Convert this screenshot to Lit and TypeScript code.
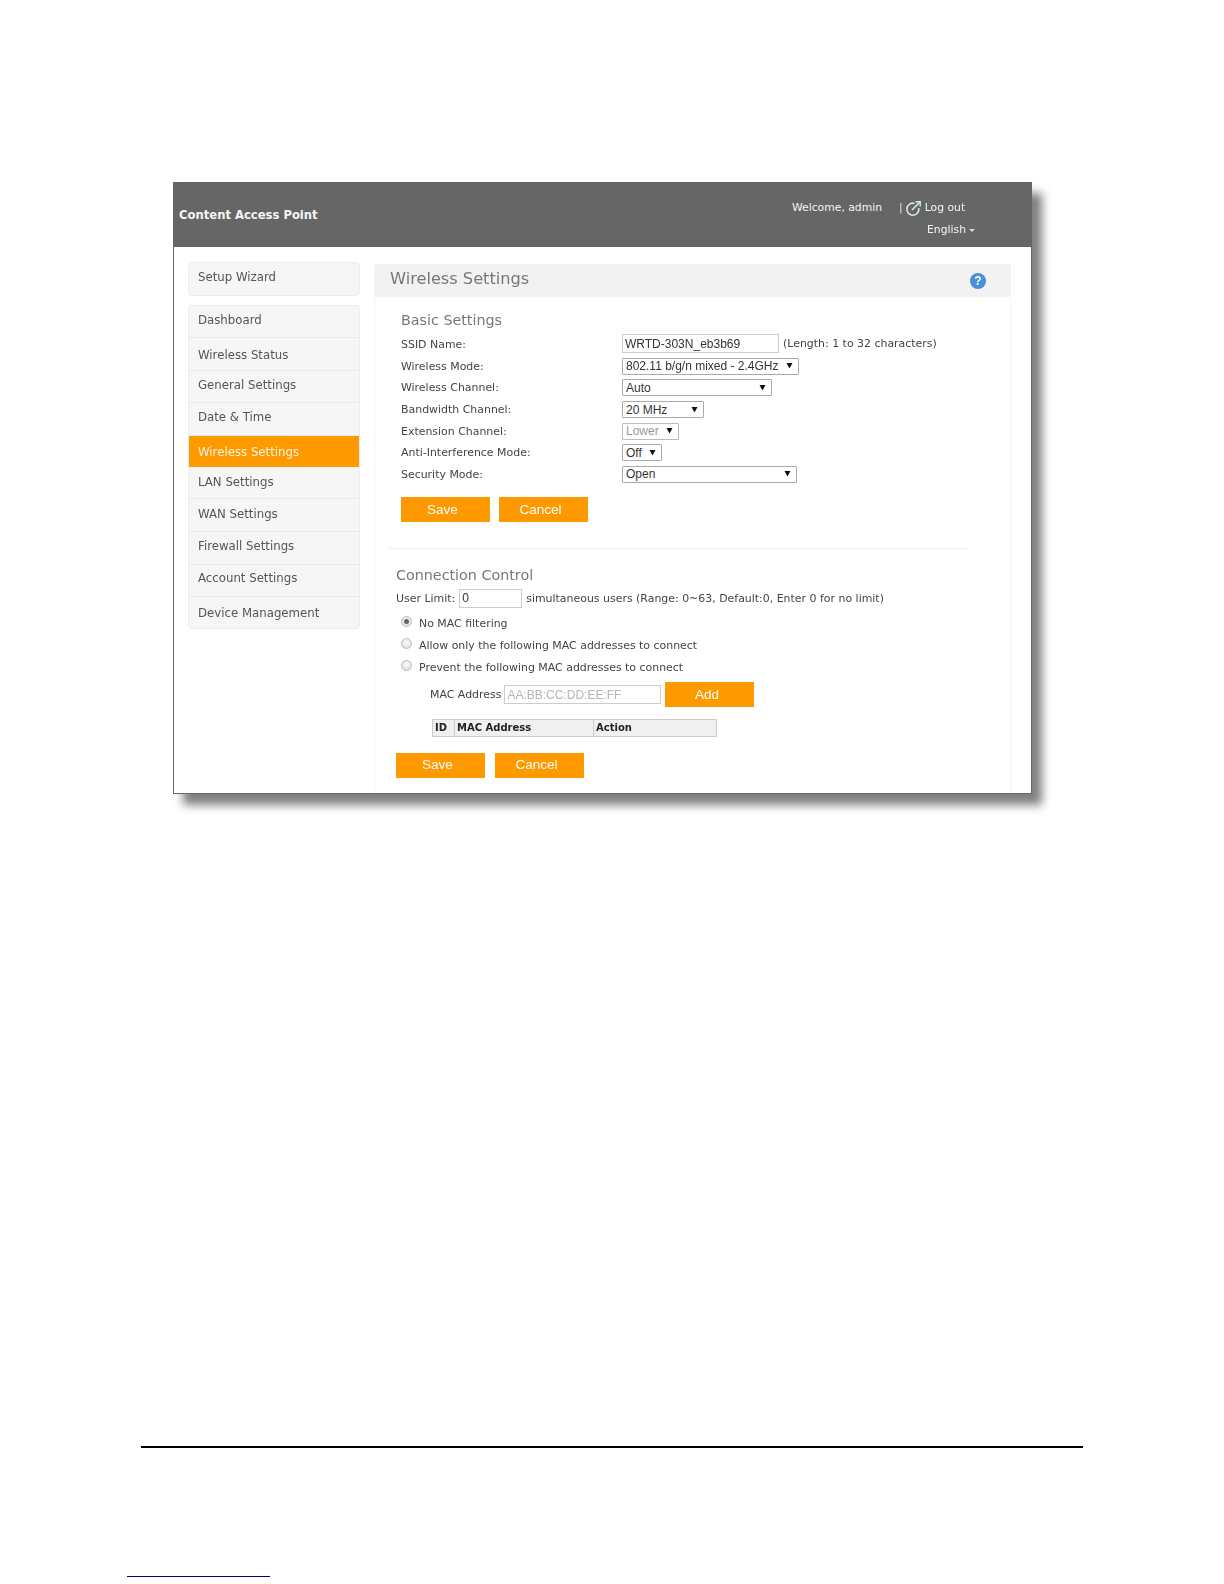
import { LitElement, html, css, svg } from "lit";
import { customElement } from "lit/decorators.js";

const nav = [
  { label: "Dashboard", h: 32, t: 6 },
  { label: "Wireless Status", h: 33, t: 9 },
  { label: "General Settings", h: 32, t: 6 },
  { label: "Date & Time", h: 33, t: 6 },
  { label: "Wireless Settings", h: 31, t: 8, active: true },
  { label: "LAN Settings", h: 32, t: 7 },
  { label: "WAN Settings", h: 33, t: 7 },
  { label: "Firewall Settings", h: 33, t: 6 },
  { label: "Account Settings", h: 32, t: 5 },
  { label: "Device Management", h: 32, t: 8 },
];

const rows = [
  { label: "Wireless Mode:", value: "802.11 b/g/n mixed - 2.4GHz", w: 177 },
  { label: "Wireless Channel:", value: "Auto", w: 150 },
  { label: "Bandwidth Channel:", value: "20 MHz", w: 82 },
  { label: "Extension Channel:", value: "Lower", w: 57, off: true },
  { label: "Anti-Interference Mode:", value: "Off", w: 40 },
  { label: "Security Mode:", value: "Open", w: 175 },
];

const arrow = svg`<svg class="arrow" width="7" height="7" viewBox="0 0 7 7"><path d="M0.5 1H6.5L3.5 6.5Z" fill="#111"/></svg>`;

@customElement("app-root")
export class AppRoot extends LitElement {
  static styles = css`
    :host { display: block; background: #fff; height: 1584px; overflow: hidden; font-family: "DejaVu Sans", Verdana, sans-serif; }
    .page { display: flex; flex-direction: column; height: 1584px; padding-top: 182px; box-sizing: border-box; }
    .win { margin-left: 173px; width: 859px; height: 612px; box-sizing: border-box; background: #fff; border: 1px solid #666; border-top: 0; box-shadow: 10px 11px 9px rgba(0,0,0,.5); filter: blur(.4px); display: flex; flex-direction: column; }
    .top { height: 65px; margin: 0 -1px 0 -1px; background: #666; display: flex; color: #f4f4f4; flex: none; }
    .brand { flex: 1; font-size: 11.6px; font-weight: 700; padding: 26px 0 0 6px; line-height: 15px; }
    .user { width: 240px; font-size: 10.8px; line-height: 14px; }
    .u1 { display: flex; align-items: center; padding-top: 19px; height: 14px; }
    .sep { margin-left: 17px; opacity: .9; }
    .u1 svg { margin: 0 3px 0 2px; }
    .u2 { display: flex; align-items: center; margin: 8px 0 0 135px; }
    .caret { width: 0; height: 0; border: 3px solid transparent; border-top: 3px solid #bfe3e0; border-bottom: 0; margin-left: 3px; }
    .body { flex: 1; display: flex; min-height: 0; }
    .side { width: 172px; margin: 15px 0 0 14px; flex: none; font-size: 11.75px; color: #555; }
    .item { box-sizing: border-box; line-height: 16px; background: #f6f6f6; border-bottom: 1px solid #e9e9e9; }
    .wizard { height: 34px; padding-top: 6px; border: 1px solid #ececec; border-radius: 4px; padding-left: 9px; }
    .group { margin-top: 9px; border: 1px solid #ececec; border-radius: 4px; border-width: 1px 1px 0; overflow: hidden; }
    .group .item { padding-left: 9px; }
    .item.active { background: #ff9900; color: #fff4e0; border-bottom-color: #ff9900; }
    .main { width: 637px; margin: 17px 0 0 14px; border: solid #f4f4f4; border-width: 0 1px; box-sizing: border-box; flex: none; }
    .head { height: 33px; margin: 0 -1px; background: #f2f2f2; border-radius: 4px 4px 0 0; display: flex; align-items: center; justify-content: space-between; padding: 0 25px 0 16px; font-size: 16.2px; color: #777; }
    .head span { margin-top: -4px; }
    .help { width: 16px; height: 16px; border-radius: 50%; background: #4a90d9; color: #fff; font: 700 12px/16px "Liberation Sans", Arial, sans-serif; text-align: center; margin-top: 1px; }
    .sec { margin-left: 26px; }
    h3 { font-size: 14.3px; font-weight: 400; color: #777; margin: 0; line-height: 18px; }
    .sec1 h3 { margin-top: 14px; }
    .form { margin-top: 4px; font-size: 10.95px; color: #444; }
    .row { display: flex; align-items: center; height: 21.6px; }
    .row label { width: 221px; flex: none; position: relative; top: 1px; }
    .text { box-sizing: border-box; border: 1px solid #ccc; height: 19px; padding: 0 2px; font: 12px "Liberation Sans", Arial, sans-serif; color: #333; background: #fff; outline: 0; }
    .hint { margin-left: 4px; }
    .sel { box-sizing: border-box; height: 17px; margin-top: 2px; border: 1px solid #aaa; border-radius: 1px; background: #fff; display: flex; align-items: center; justify-content: space-between; padding: 0 5px 0 3px; font: 12px "Liberation Sans", Arial, sans-serif; color: #333; }
    .sel.off { color: #999; border-color: #bbb; }
    .arrow { flex: none; margin-top: -1px; }
    .btns { display: flex; gap: 9px; }
    .sec1 .btns { margin-top: 13px; }
    .btn { box-sizing: border-box; width: 89px; height: 25px; border: 0; padding: 0 6px 1px 0; background: #ff9900; color: #fff; font: 13.5px "Liberation Sans", Arial, sans-serif; }
    hr { height: 1px; border: 0; background: #f0f0f0; margin: 26px 0 0 13px; width: 580px; }
    .sec2 { margin-left: 21px; font-size: 10.95px; color: #444; }
    .sec2 h3 { margin-top: 17px; }
    .limit { display: flex; align-items: center; height: 18px; margin-top: 5px; }
    .limit .text { width: 63px; height: 19px; margin: 0 4px; }
    .radio { display: flex; align-items: center; height: 22.2px; padding-left: 5px; gap: 7px; }
    .limit + .radio { margin-top: 5px; }
    .dot { width: 11px; height: 11px; border-radius: 50%; box-sizing: border-box; border: 1px solid #bbb; background: radial-gradient(circle at 50% 40%, #fafafa, #d8d8d8); display: flex; align-items: center; justify-content: center; margin-top: -4px; flex: none; }
    .dot.on i { display: block; width: 5px; height: 5px; border-radius: 50%; background: #666; }
    .mac { display: flex; align-items: center; margin: 3px 0 0 34px; height: 26px; }
    .mac .text { width: 157px; height: 19px; margin-left: 3px; }
    .mac .text::placeholder { color: #b5b5b5; opacity: 1; }
    .mac .btn { margin-left: 4px; }
    table { border-collapse: collapse; margin: 11px 0 0 36px; width: 285px; height: 18px; background: #f0f0f0; border: 1px solid #ccc; table-layout: fixed; color: #222; }
    th { font-size: 10px; font-weight: 700; text-align: left; padding: 0 0 0 2px; border-right: 1px solid #ccc; line-height: 15px; }
    th:last-child { border-right: 0; }
    .sec2 .btns { margin-top: 16px; gap: 10px; }
    .rule { margin: 652px 0 0 141px; width: 942px; height: 1px; background: #000; flex: none; border-bottom: 0.5px solid #000; }
    .blue { margin: 128px 0 0 127px; width: 143px; height: 1px; background: #000080; flex: none; }
  `;

  render() {
    return html`
      <div class="page">
        <div class="win">
          <div class="top">
            <div class="brand">Content Access Point</div>
            <div class="user">
              <div class="u1">
                <span>Welcome, admin</span><span class="sep">|</span>
                <svg width="17" height="17" viewBox="0 0 17 17" fill="none" stroke="#cfeaea" stroke-width="1.6">
                  <path d="M9.5 3.4A6 6 0 1 0 13.8 8.2"/><path d="M7 10L14.5 2.5"/><path d="M10.5 1.8H15.2V6.5" stroke-width="1.4"/>
                </svg>
                <span>Log out</span>
              </div>
              <div class="u2"><span>English</span><i class="caret"></i></div>
            </div>
          </div>
          <div class="body">
            <nav class="side">
              <div class="item wizard">Setup Wizard</div>
              <div class="group">
                ${nav.map(n => html`<div class="item ${n.active ? "active" : ""}" style="height:${n.h}px;padding-top:${n.t}px">${n.label}</div>`)}
              </div>
            </nav>
            <section class="main">
              <div class="head"><span>Wireless Settings</span><div class="help">?</div></div>
              <div class="sec sec1">
                <h3>Basic Settings</h3>
                <div class="form">
                  <div class="row">
                    <label>SSID Name:</label>
                    <input class="text" style="width:157px" .value=${"WRTD-303N_eb3b69"} />
                    <span class="hint">(Length: 1 to 32 characters)</span>
                  </div>
                  ${rows.map(r => html`<div class="row">
                    <label>${r.label}</label>
                    <div class="sel ${r.off ? "off" : ""}" style="width:${r.w}px"><span>${r.value}</span>${arrow}</div>
                  </div>`)}
                </div>
                <div class="btns"><button class="btn">Save</button><button class="btn">Cancel</button></div>
              </div>
              <hr />
              <div class="sec2">
                <h3>Connection Control</h3>
                <div class="limit">User Limit:<input class="text" .value=${"0"} />simultaneous users (Range: 0~63, Default:0, Enter 0 for no limit)</div>
                <div class="radio"><span class="dot on"><i></i></span>No MAC filtering</div>
                <div class="radio"><span class="dot"></span>Allow only the following MAC addresses to connect</div>
                <div class="radio"><span class="dot"></span>Prevent the following MAC addresses to connect</div>
                <div class="mac">MAC Address<input class="text" placeholder="AA:BB:CC:DD:EE:FF" /><button class="btn">Add</button></div>
                <table><tr><th style="width:19px">ID</th><th style="width:136px">MAC Address</th><th>Action</th></tr></table>
                <div class="btns"><button class="btn">Save</button><button class="btn">Cancel</button></div>
              </div>
            </section>
          </div>
        </div>
        <div class="rule"></div>
        <div class="blue"></div>
      </div>
    `;
  }
}
